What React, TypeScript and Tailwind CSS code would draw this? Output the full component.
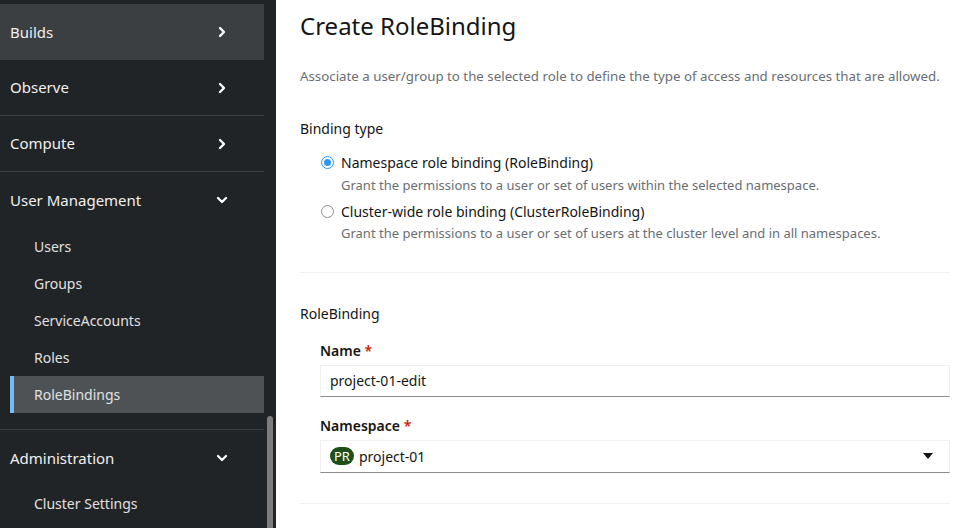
import { ChevronRight, ChevronDown } from "lucide-react";

const font = { fontFamily: '"Noto Sans", "Open Sans", sans-serif' };

function NavGroup({ label, open, hover, line }: { label: string; open?: boolean; hover?: boolean; line?: boolean }) {
  return (
    <div
      className={`h-[56px] flex items-center justify-between pl-[10px] pr-[34px] text-[15px] text-[#f0f0f0] ${
        hover ? "bg-[#3c3f42]" : ""
      } ${line ? "border-b border-[#3c3f42]" : ""}`}
    >
      <span>{label}</span>
      {open ? (
        <ChevronDown size={16} strokeWidth={3.5} className="text-white" />
      ) : (
        <ChevronRight size={16} strokeWidth={3.5} className="text-white" />
      )}
    </div>
  );
}

function SubItem({ label, active }: { label: string; active?: boolean }) {
  return (
    <div
      className={`h-[37px] ml-[10px] flex items-center text-[14px] text-[#e0e0e0] ${
        active ? "bg-[#4f5255] border-l-4 border-[#73bcf7] pl-[20px]" : "pl-[24px]"
      }`}
    >
      {label}
    </div>
  );
}

function Radio({ checked }: { checked?: boolean }) {
  return (
    <div
      className={`w-[13px] h-[13px] rounded-full border flex items-center justify-center shrink-0 mt-[3px] ${
        checked ? "border-[#2b9af3]" : "border-[#8a8d90] border-[1.5px]"
      }`}
    >
      {checked && <div className="w-[7px] h-[7px] rounded-full bg-[#2b9af3]" />}
    </div>
  );
}

export default function App() {
  return (
    <div className="w-[973px] h-[528px] flex overflow-hidden bg-white" style={font}>
      <aside className="w-[276px] shrink-0 bg-[#212427] flex">
        <nav className="w-[264px] pt-[4px]">
          <NavGroup label="Builds" hover />
          <NavGroup label="Observe" line />
          <NavGroup label="Compute" line />
          <NavGroup label="User Management" open />
          <div className="pb-[16px]">
            <SubItem label="Users" />
            <SubItem label="Groups" />
            <SubItem label="ServiceAccounts" />
            <SubItem label="Roles" />
            <SubItem label="RoleBindings" active />
          </div>
          <div className="h-px bg-[#3c3f42]" />
          <NavGroup label="Administration" open />
          <div className="-mt-[1px]">
            <SubItem label="Cluster Settings" />
          </div>
        </nav>
        <div className="flex-1 flex flex-col items-center">
          <div className="h-[416px]" />
          <div className="w-[6px] flex-1 bg-[#7d7d7d] rounded-t-sm" />
        </div>
      </aside>

      <main className="flex-1 pl-[24px] pr-[23px] text-[#151515]">
        <h1 className="text-[24px] leading-none mt-[14px]">Create RoleBinding</h1>
        <p className="text-[13.3px] text-[#6a6e73] mt-[29px]">
          Associate a user/group to the selected role to define the type of access and resources that are allowed.
        </p>
        <div className="text-[14px] mt-[31px]">Binding type</div>
        <div className="pl-[21px] mt-[14px] flex flex-col gap-[7px]">
          <div className="flex gap-[7px]">
            <Radio checked />
            <div>
              <div className="text-[14px] leading-[20px]">Namespace role binding (RoleBinding)</div>
              <div className="text-[13px] leading-[20px] text-[#6a6e73] mt-[2px]">
                Grant the permissions to a user or set of users within the selected namespace.
              </div>
            </div>
          </div>
          <div className="flex gap-[7px]">
            <Radio />
            <div>
              <div className="text-[14px] leading-[20px]">Cluster-wide role binding (ClusterRoleBinding)</div>
              <div className="text-[13px] leading-[20px] text-[#6a6e73] mt-[1px]">
                Grant the permissions to a user or set of users at the cluster level and in all namespaces.
              </div>
            </div>
          </div>
        </div>
        <div className="h-px bg-[#f0f0f0] mt-[29px]" />
        <div className="text-[14px] mt-[30px]">RoleBinding</div>
        <div className="pl-[20px] mt-[16px]">
          <div className="text-[14px] font-semibold">
            Name <span className="text-[#c9190b]">*</span>
          </div>
          <div className="mt-[4px] h-[32px] border border-[#f0f0f0] border-b-[#8a8d90] flex items-center px-[9px] text-[14px]">
            project-01-edit
          </div>
          <div className="text-[14px] font-semibold mt-[18px]">
            Namespace <span className="text-[#c9190b]">*</span>
          </div>
          <div className="mt-[4px] h-[33px] border border-[#f0f0f0] border-b-[#8a8d90] flex items-center pl-[9px] pr-[16px] text-[14px]">
            <span className="bg-[#1e4f18] text-white rounded-full px-[4px] text-[13px] leading-[18px] mr-[5px]">PR</span>
            <span className="flex-1">project-01</span>
            <svg width="10" height="6" viewBox="0 0 10 6">
              <path d="M0 0h10L5 6z" fill="#151515" />
            </svg>
          </div>
        </div>
        <div className="h-px bg-[#f0f0f0] mt-[30px]" />
      </main>
    </div>
  );
}
